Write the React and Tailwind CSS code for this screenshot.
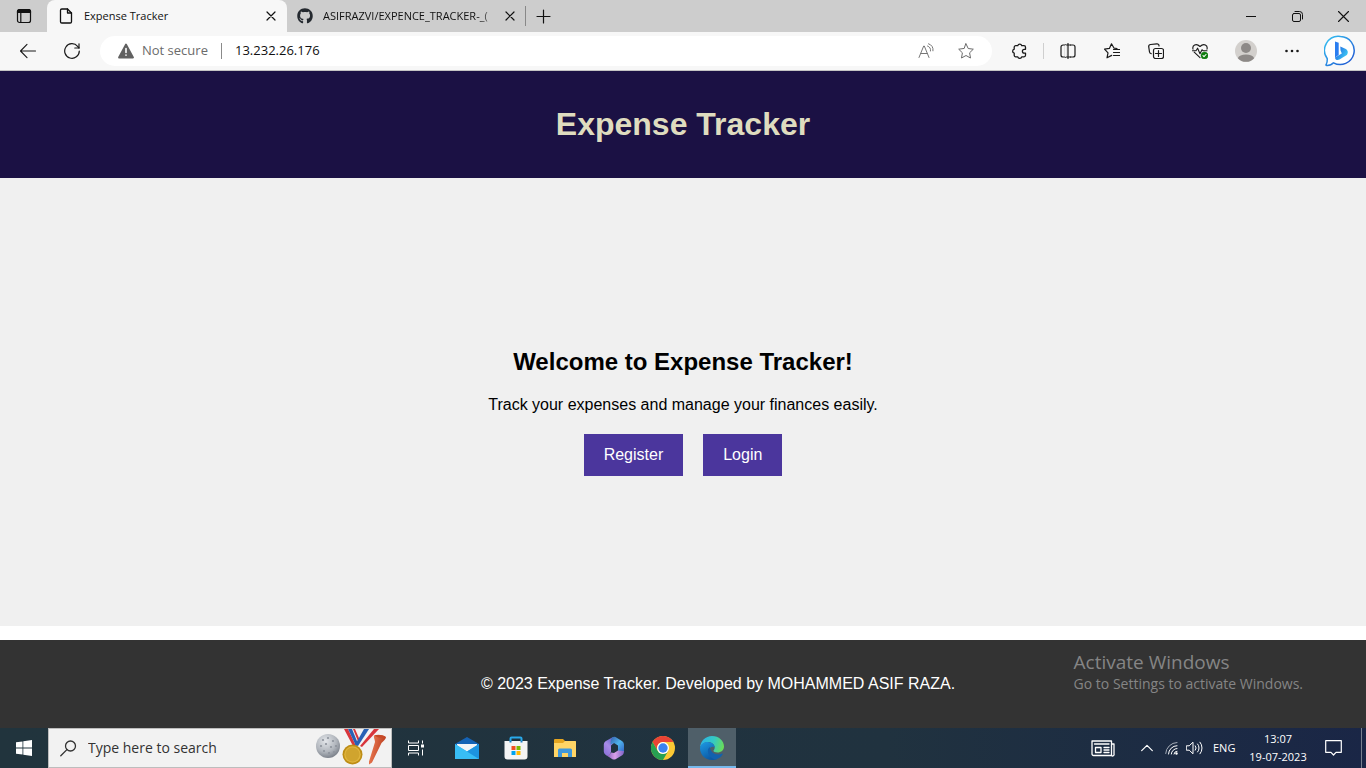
import React from "react";
import { FaGithub } from "react-icons/fa";

const Icon = ({ w = 16, h = w, sw = 1, className = "", children }) => (
  <svg
    width={w}
    height={h}
    viewBox={`0 0 ${w} ${h}`}
    fill="none"
    stroke="currentColor"
    strokeWidth={sw}
    strokeLinecap="round"
    strokeLinejoin="round"
    className={`shrink-0 ${className}`}
    aria-hidden="true"
  >
    {children}
  </svg>
);

const CloseIcon = () => (
  <Icon w={10} sw={1.2}>
    <path d="M1 1l8 8M9 1L1 9" />
  </Icon>
);

function TabStrip() {
  return (
    <div className="flex h-8 shrink-0 items-stretch bg-[#cdcdcd] text-[#111]">
      <button aria-label="Tab actions" className="flex w-[47px] items-center justify-center rounded-br-md">
        <Icon w={16} sw={1.2}>
          <rect x="1.5" y="1.5" width="13" height="13" rx="2" />
          <path d="M1.5 4.500v-1a2 2 0 012-2h9a2 2 0 012 2v1z" fill="currentColor" />
          <path d="M4.8 5v9.5" />
        </Icon>
      </button>
      <div className="flex w-[240px] items-center rounded-t-lg bg-[#f7f7f7] pr-2 pl-3">
        <Icon w={14} h={16} sw={1.3}>
          <path d="M8.5 1H2.8A1.3 1.3 0 001.5 2.3v11.4A1.3 1.3 0 002.8 15h8.4a1.3 1.3 0 001.3-1.3V5z" />
          <path d="M8.5 1v4h4" />
        </Icon>
        <button className="ml-[11px] min-w-0 flex-1 truncate text-left text-[11px]">Expense Tracker</button>
        <button aria-label="Close Expense Tracker" className="flex size-4 items-center justify-center">
          <CloseIcon />
        </button>
      </div>
      <div className="flex w-[238px] items-center pr-[7px] pl-[10px]">
        <FaGithub className="size-4 shrink-0 text-[#24292f]" />
        <button className="ml-[10px] min-w-0 flex-1 text-left text-[11px] whitespace-nowrap [mask-image:linear-gradient(to_right,black_90%,transparent)]">
          ASIFRAZVI/EXPENCE_TRACKER-_(
        </button>
        <button aria-label="Close repository tab" className="ml-1 flex size-4 items-center justify-center">
          <CloseIcon />
        </button>
      </div>
      <span className="my-[6px] w-px bg-[#888]" />
      <button aria-label="New tab" className="flex w-[34px] items-center justify-center">
        <Icon w={15} sw={1.2}>
          <path d="M7.5 1v13M1 7.5h13" />
        </Icon>
      </button>
      <div className="ml-auto flex">
        <button aria-label="Minimize" className="flex w-[46px] items-center justify-center">
          <Icon w={10}>
            <path d="M0 5.5h10" />
          </Icon>
        </button>
        <button aria-label="Restore" className="flex w-[46px] items-center justify-center">
          <Icon w={11}>
            <rect x="0.5" y="2.5" width="8" height="8" rx="1.5" />
            <path d="M3 .5h4.5a3 3 0 013 3V8" />
          </Icon>
        </button>
        <button aria-label="Close window" className="flex w-[46px] items-center justify-center">
          <Icon w={11} sw={1.1}>
            <path d="M.5 .5l10 10M10.500 .5l-10 10" />
          </Icon>
        </button>
      </div>
    </div>
  );
}

const ToolButton = ({ label, children }) => (
  <button aria-label={label} className="flex w-11 shrink-0 items-center justify-center">
    {children}
  </button>
);

function Toolbar() {
  return (
    <div className="flex h-[39px] shrink-0 items-stretch border-b border-[#c4c4c4] bg-[#f7f7f7] pr-1 pl-[6px] text-[#1a1a1a]">
      <ToolButton label="Back">
        <Icon w={16} sw={1.1}>
          <path d="M15.500 8H.5M7 1.300L.5 8 7 14.700" />
        </Icon>
      </ToolButton>
      <ToolButton label="Refresh">
        <Icon w={16} sw={1.2}>
          <path d="M15.300 8A7.300 7.300 0 1113.600 3.300L15 5" />
          <path d="M15 .8V5h-4.200" />
        </Icon>
      </ToolButton>
      <div className="my-1 ml-[6px] flex min-w-0 flex-1 items-center rounded-full bg-white pr-[18px] pl-[18px] text-[#6b6b6b]">
        <Icon w={16}>
          <path d="M8 1.500L15 14.500H1z" fill="#616161" stroke="#616161" strokeWidth="1.800" />
          <path d="M8 5.500v4M8 12v.2" stroke="#fff" strokeWidth="1.600" />
        </Icon>
        <button className="ml-2 w-[79px] text-left text-[13px] whitespace-nowrap">Not secure</button>
        <span className="h-4 w-px bg-[#8a8a8a]" />
        <input
          aria-label="Address"
          defaultValue="13.232.26.176"
          className="ml-[13px] min-w-0 flex-1 bg-transparent text-[13px] text-[#111] outline-none"
        />
        <button aria-label="Read aloud">
          <Icon w={16}>
            <path d="M1 14.500L5.700 3h.6L11 14.500M2.700 10.500h6.600M9.500 3a4.500 4.500 0 013 5M10.500 .8a6.500 6.500 0 014.500 7" stroke="#777" />
          </Icon>
        </button>
        <button aria-label="Add to favorites" className="ml-6">
          <Icon w={16}>
            <path
              d="M8 .8l2.200 4.700 5.100.7-3.700 3.600.9 5.200L8 12.500 3.500 15l.9-5.200L.7 6.200l5.100-.7z"
              stroke="#6b6b6b"
            />
          </Icon>
        </button>
      </div>
      <div className="ml-[5px] flex">
        <ToolButton label="Extensions">
          <Icon w={16} sw={1.300}>
            <path d="M3.200 4.200a1.500 1.500 0 011.500-1.500h2.100a2 2 0 013.900 0h2.300a1.500 1.500 0 011.500 1.500v2.100h-1.200a1.900 1.900 0 000 3.800h1.200v2.200a1.500 1.500 0 01-1.500 1.500h-2.300a2 2 0 01-3.900 0H4.700a1.500 1.500 0 01-1.500-1.500v-2.200a2 2 0 010-3.900z" />
          </Icon>
        </ToolButton>
        <span className="mx-[2px] my-[11px] w-px bg-[#cfcfcf]" />
        <ToolButton label="Split screen">
          <Icon w={16} sw={1.200}>
            <path d="M5.500 2H3a2 2 0 00-2 2v8a2 2 0 002 2h2.500V2zM10.500 2H13a2 2 0 012 2v8a2 2 0 01-2 2h-2.500" />
            <path d="M5.500 2H8M8 14H5.500M8 2h2.500M8 14h2.500" />
            <path d="M5.500 2.700v10.600" stroke="#f7f7f7" strokeWidth="1.500" />
            <path d="M8 .6v14.800" />
          </Icon>
        </ToolButton>
        <ToolButton label="Favorites">
          <Icon w={16} sw={1.200}>
            <path d="M13 5.500l-2.900-.3L7.500 .8 5.400 5.400l-4.900.7L4 9.800l-1 5 4.700-2.400M9.500 6.500h6M9.500 9.500h6M9.500 12.500h6" />
          </Icon>
        </ToolButton>
        <ToolButton label="Collections">
          <Icon w={16} sw={1.200}>
            <rect x="5.500" y="5.500" width="10" height="10" rx="2" />
            <path d="M10.500 7.500v6M7.500 10.500h6M11 3A2 2 0 008.800 .8L2.500 1.500A2 2 0 00.7 3.700L1.500 9a2 2 0 001.700 1.700" />
          </Icon>
        </ToolButton>
        <ToolButton label="Browser essentials">
          <Icon w={16} sw={1.100}>
            <path d="M1 6.200C0 2.500 4-.3 8 3.500c4-3.800 8-1 7 2.700M2.200 9.200L8 14.700" />
            <path d="M.5 7.700H4l1.600-2.500 2.400 5.500 2-4 1 1h4" />
            <circle cx="12.500" cy="12.500" r="3.500" fill="#107c10" stroke="#107c10" strokeWidth=".5" />
            <path d="M11 12.700l1 1 2-2.200" stroke="#fff" />
          </Icon>
        </ToolButton>
        <div className="mx-[2px] flex">
          <ToolButton label="Profile">
            <Icon w={22}>
              <circle cx="11" cy="11" r="11" fill="#d3d0cd" stroke="none" />
              <circle cx="11" cy="8" r="5" fill="#8d8987" stroke="none" />
              <path d="M2.800 18.200a8.500 5 0 0116.400 0 11 11 0 01-16.400 0z" fill="#8d8987" stroke="none" />
            </Icon>
          </ToolButton>
        </div>
        <ToolButton label="Settings and more">
          <Icon w={16}>
            <g fill="currentColor" stroke="none">
              <circle cx="2.500" cy="8" r="1.300" />
              <circle cx="8" cy="8" r="1.300" />
              <circle cx="13.500" cy="8" r="1.300" />
            </g>
          </Icon>
        </ToolButton>
        <div className="ml-1 flex">
          <ToolButton label="Bing Chat">
            <Icon w={32}>
              <defs>
                <linearGradient id="bingRing" x1="0" y1="0" x2="1" y2="1">
                  <stop offset="0" stopColor="#35c5f3" />
                  <stop offset="1" stopColor="#1f4fd0" />
                </linearGradient>
                <linearGradient id="bingB" x1="0" y1="0" x2="1" y2="0.600">
                  <stop offset="0" stopColor="#2054e0" />
                  <stop offset="1" stopColor="#3ccbf4" />
                </linearGradient>
              </defs>
              <path
                d="M16.500 1.500a14 14 0 11-7 26.300c-1.500 1.700-4 2.800-6.700 2.700-1-.1-1-.7-.5-1.300 1-1.500 1-3 1-5.500A14 14 0 0116.500 1.500z"
                fill="#fff"
                stroke="url(#bingRing)"
                strokeWidth="1.500"
              />
              <path d="M11 6.500l3.700 1.300v12.200L11 22.500z" fill="#2a7df0" stroke="none" />
              <path
                d="M16.300 11.500l5 2.200c2.800 1.200 3.200 4.200 1.500 6.300l-7.300 4.600c-2.300 1-4.500 0-4.500-2.200l6.800-4-1.300-3.200z"
                fill="url(#bingB)"
                stroke="none"
              />
            </Icon>
          </ToolButton>
        </div>
      </div>
    </div>
  );
}

function Page() {
  return (
    <div className="flex flex-1 flex-col bg-white font-['Liberation_Sans',Arial,sans-serif] text-base text-black">
      <header className="bg-[#1b1144] py-[35px] text-center text-[#dfdcbf]">
        <h1 className="text-[32px] leading-[37px] font-bold">Expense Tracker</h1>
      </header>
      <main className="flex flex-1 flex-col items-center justify-center bg-[#f0f0f0] pb-px text-center">
        <h2 className="mt-[20px] text-2xl leading-7 font-bold">Welcome to Expense Tracker!</h2>
        <p className="mt-5 leading-[18px]">Track your expenses and manage your finances easily.</p>
        <div className="mt-5 flex gap-5">
          <a href="#register" className="bg-[#4b369d] px-5 py-3 leading-[18px] text-white">
            Register
          </a>
          <a href="#login" className="bg-[#4b369d] px-5 py-3 leading-[18px] text-white">
            Login
          </a>
        </div>
      </main>
      <footer className="relative mt-[14px] bg-[#333] py-[35px] pl-[70px] text-center leading-[18px] text-white">
        <p>© 2023 Expense Tracker. Developed by MOHAMMED ASIF RAZA.</p>
        <div className="absolute top-[10px] right-[63px] text-left font-['Open_Sans','Noto_Sans',sans-serif] text-[#858585]">
          <p className="text-[19px] leading-6">Activate Windows</p>
          <p className="text-sm leading-5">Go to Settings to activate Windows.</p>
        </div>
      </footer>
    </div>
  );
}

const TaskButton = ({ label, active, children }) => (
  <button
    aria-label={label}
    className={`flex w-12 shrink-0 items-center justify-center ${
      active ? "border-b-2 border-[#76b9ed] bg-[#4f5f69] pt-[2px]" : ""
    }`}
  >
    {children}
  </button>
);

function SearchArt() {
  return (
    <svg width="72" height="38" viewBox="0 0 72 38" className="shrink-0" aria-hidden="true">
      <defs>
        <radialGradient id="golf" cx="0.400" cy="0.300" r="0.750">
          <stop offset="0" stopColor="#e3e6ea" />
          <stop offset="0.600" stopColor="#b0b5bc" />
          <stop offset="1" stopColor="#747a84" />
        </radialGradient>
        <linearGradient id="tee" x1="0" y1="0" x2="1" y2="0.300">
          <stop offset="0" stopColor="#f4865c" />
          <stop offset="1" stopColor="#b93c1e" />
        </linearGradient>
      </defs>
      <circle cx="12" cy="17" r="12" fill="url(#golf)" />
      <g fill="#8d939c">
        {[[7, 11], [12, 9], [17, 12], [5, 17], [10, 15], [15, 18], [20, 17], [8, 22], [13, 24], [18, 23]].map(([x, y]) => (
          <circle key={`${x}-${y}`} cx={x} cy={y} r="1.100" />
        ))}
      </g>
      <path d="M28 0h11l7 17h-8z" fill="#f4f4f4" />
      <path d="M28 0h4l8 17h-3zM37 0h2l7 16-2 1z" fill="#d8363c" />
      <path d="M32 0h4l7 17h-3z" fill="#2861b5" />
      <path d="M51 0h11L45 19l-5-3z" fill="#f4f4f4" />
      <path d="M58 0h5L46 18l-2-1z" fill="#d8363c" />
      <path d="M48 0h5L42 17l-3-1z" fill="#2861b5" />
      <circle cx="36.500" cy="25.500" r="10" fill="#bd8d16" />
      <circle cx="36.500" cy="25.500" r="8.300" fill="#e0b53e" />
      <circle cx="36.500" cy="25.500" r="7" fill="#d0a42e" />
      <path d="M58 6.500c3-1.500 9-1 12 1.500 0 2-2.500 4-4.500 6L56 33.500 53 35.500l0-3L59 13c0-2-1.500-4.500-1-6.500z" fill="url(#tee)" />
      <path d="M58.500 6.500c3-1 8-.5 11 1.500-3 1.500-8 1-11-1.500z" fill="#c64a28" />
    </svg>
  );
}

function Taskbar() {
  return (
    <div className="flex h-10 shrink-0 items-stretch bg-linear-to-r from-[#21343d] via-[#20323f] via-65% to-[#1a2646] text-white">
      <TaskButton label="Start">
        <svg width="16" height="16" viewBox="0 0 16 16" fill="#fff" aria-hidden="true">
          <path d="M0 2.300L6.500 1.400V7.600H0zM7.300 1.300L16 0v7.600H7.300zM0 8.400h6.500v6.200L0 13.700zM7.300 8.400H16V16l-8.700-1.300z" />
        </svg>
      </TaskButton>
      <div className="flex w-[344px] items-center border border-[#bdbdbd] bg-[#f2f2f2] pr-[3px] pl-[11px] text-[#333]">
        <Icon w={17} sw={1.300}>
          <circle cx="10.500" cy="6" r="5" />
          <path d="M6.900 9.600L.8 15.800" />
        </Icon>
        <input
          aria-label="Type here to search"
          placeholder="Type here to search"
          className="ml-[11px] min-w-0 flex-1 bg-transparent text-sm outline-none placeholder:text-[#333]"
        />
        <SearchArt />
      </div>
      <TaskButton label="Task view">
        <Icon w={18} h={16}>
          <path d="M1.500 .5v2.500h10V.5M1.500 15.500V13h10v2.500M1.500 5.500h10v5h-10zM15.500 .5v3M15.500 9.500v6" strokeLinecap="butt" />
          <rect x="14" y="4.500" width="3" height="3" fill="#fff" stroke="none" />
        </Icon>
      </TaskButton>
      <div className="ml-[3px] flex gap-px">
        <TaskButton label="Mail">
          <svg width="24" height="22" viewBox="0 0 24 22" aria-hidden="true">
            <path d="M0 7L12 0l12 7v4H0z" fill="#1563b5" />
            <path d="M2 7h20v3l-10 6L2 10z" fill="#f3f4f6" />
            <path d="M0 7l12 7.500L24 7v15H0z" fill="#2fb4f0" />
            <path d="M0 7l24 15H0z" fill="#38bdf5" />
            <path d="M12 14.500L24 7v15z" fill="#1d93df" />
          </svg>
        </TaskButton>
        <TaskButton label="Microsoft Store">
          <svg width="24" height="24" viewBox="0 0 24 24" aria-hidden="true">
            <path d="M6.500 6V2.500a1 1 0 011-1h9a1 1 0 011 1V6" fill="none" stroke="#29a9ea" strokeWidth="2" />
            <path d="M.5 5h23v15.500a3 3 0 01-3 3h-17a3 3 0 01-3-3z" fill="#f4f4f4" />
            <path d="M6.500 5v1.500M17.500 5v1.500" stroke="#1a7fc4" strokeWidth="2" />
            <path d="M7.500 10h4v4h-4z" fill="#f25022" />
            <path d="M12.500 10h4v4h-4z" fill="#7fba00" />
            <path d="M7.500 15h4v4h-4z" fill="#00a4ef" />
            <path d="M12.500 15h4v4h-4z" fill="#ffb900" />
          </svg>
        </TaskButton>
        <TaskButton label="File Explorer">
          <svg width="22" height="20" viewBox="0 0 22 20" aria-hidden="true">
            <path d="M0 2a1 1 0 011-1h8l2 2h10a1 1 0 011 1v14H0z" fill="#e5a520" />
            <path d="M0 5h9l2-2h10.500l.5 1v15H0z" fill="#ffd566" />
            <path d="M4 19v-7a1.500 1.500 0 011.500-1.500h11A1.500 1.500 0 0118 12v7h-4v-4H8v4z" fill="#3f98dc" />
          </svg>
        </TaskButton>
        <TaskButton label="Microsoft 365">
          <svg width="22" height="24" viewBox="0 0 22 24" aria-hidden="true">
            <defs>
              <linearGradient id="mLeft" x1="0.800" y1="0" x2="0.200" y2="1">
                <stop offset="0" stopColor="#5a62c8" />
                <stop offset="0.500" stopColor="#a78be8" />
                <stop offset="1" stopColor="#8a70d8" />
              </linearGradient>
              <linearGradient id="mRight" x1="0" y1="0" x2="1" y2="1">
                <stop offset="0" stopColor="#3560ae" />
                <stop offset="0.500" stopColor="#4fb4ec" />
                <stop offset="1" stopColor="#3160c4" />
              </linearGradient>
              <linearGradient id="mBottom" x1="0" y1="0" x2="1" y2="0">
                <stop offset="0" stopColor="#7a58b8" />
                <stop offset="0.500" stopColor="#d9a0e8" />
                <stop offset="1" stopColor="#7f63c8" />
              </linearGradient>
            </defs>
            <path d="M10 1L2.500 5.200A4 4 0 00.8 8.500v7a4 4 0 001.700 3.300l3 1.700L8 16V9.500L12 6V1z" fill="url(#mLeft)" />
            <path d="M9.500 1.200C8 2.500 7.500 4.500 7.500 8.500L11 7l4 2.500v5l-1 2.500 7-1V8.500a4 4 0 00-1.700-3.300L12.500 1a3 3 0 00-3 .2z" fill="url(#mRight)" />
            <path d="M3 19c2 .5 4-.5 5-2.500l3 .5 4-2.500 6 .5c0 2-.5 3.300-1.800 4.200l-6.200 3.700a4 4 0 01-4 0z" fill="url(#mBottom)" />
          </svg>
        </TaskButton>
        <TaskButton label="Chrome">
          <svg width="24" height="24" viewBox="0 0 24 24" aria-hidden="true">
            <circle cx="12" cy="12" r="12" fill="#fcc934" />
            <path d="M1.600 6A12 12 0 0122.400 6H12a6 6 0 00-5.200 9z" fill="#ea4335" />
            <path d="M1.600 6A12 12 0 0012 24l5.200-9A6 6 0 016.800 15z" fill="#27a152" />
            <circle cx="12" cy="12" r="6" fill="#fff" />
            <circle cx="12" cy="12" r="4.700" fill="#3b82ef" />
          </svg>
        </TaskButton>
        <TaskButton label="Edge" active>
          <svg width="24" height="24" viewBox="0 0 24 24" aria-hidden="true">
            <defs>
              <linearGradient id="eTop" x1="0" y1="0.300" x2="1" y2="0.500">
                <stop offset="0" stopColor="#2bb3e8" />
                <stop offset="0.550" stopColor="#35c9c3" />
                <stop offset="1" stopColor="#69dc59" />
              </linearGradient>
              <linearGradient id="eBody" x1="0" y1="0" x2="0.500" y2="1">
                <stop offset="0" stopColor="#1d9be5" />
                <stop offset="1" stopColor="#0c59a4" />
              </linearGradient>
            </defs>
            <path d="M0 11.500C.5 5 5.500 0 12 0c7 0 12 5 12 10.500 0 3.700-3 6-6.500 6-2.500 0-4-.8-4-1.700 0-.6 1.200-1.200 1.200-3.300C14.700 8.500 12 6 8 6 4 6 1 8.500 0 11.500z" fill="url(#eTop)" />
            <path d="M0 12c.5-3.500 3.700-6 7.500-6 4.500 0 7.200 2.800 7.200 5.500-1-1.500-5.700-1-5.700 3.500 0 4 3 8 8 8-1.500.7-3 1-5 1C5 24 0 18.500 0 12z" fill="url(#eBody)" />
            <path d="M9.700 11c-1.700 1.500-2 3-1.700 5 .7 4 4 7.300 8.500 7.300 3-1 5-3 6.300-5.300.2-.5-.2-.8-.7-.5-5.500 2.700-11.600-.5-12.400-6.500z" fill="#1261ae" />
          </svg>
        </TaskButton>
      </div>
      <div className="ml-auto flex items-center">
        <button aria-label="News and interests">
          <Icon w={24} h={17} sw={1.300}>
            <path d="M20.500 15.500h-18A1.500 1.500 0 011 14V1h19.500v14.500zM20.500 4H23v10a1.500 1.500 0 01-2.500 1.500M3.500 4H18M13 7.500h5M13 10h5M13 12.500h5" />
            <path d="M4.500 7.500h5.500v5H4.500z" />
          </Icon>
        </button>
        <button aria-label="Show hidden icons" className="ml-[26px]">
          <Icon w={12} h={8} sw={1.200}>
            <path d="M.7 6.700L6 1.400l5.300 5.300" />
          </Icon>
        </button>
        <button aria-label="Network" className="ml-3">
          <Icon w={13} h={14}>
            <path d="M.7 12.500A11.500 11.500 0 0112 1.500" stroke="#a8afba" />
            <path d="M3.500 13A8.500 8.500 0 0112 4.700M6.300 13A5.800 5.800 0 0112 7.500M9 13a3 3 0 013-2.700" />
            <circle cx="11.500" cy="12.500" r="1.200" fill="#fff" stroke="none" />
          </Icon>
        </button>
        <button aria-label="Volume" className="ml-2">
          <Icon w={17} h={14}>
            <path d="M.7 4.800h2.500L7 1.200v11.600L3.200 9.200H.7zM9.300 4.800a3.500 3.500 0 010 4.400M11.600 3a6 6 0 010 8M14 1.200a9 9 0 010 11.600" />
          </Icon>
        </button>
        <button className="ml-[10px] w-6 text-left text-[11px]">ENG</button>
        <button className="ml-[6px] w-[70px] text-center text-[11px] leading-[18px] whitespace-nowrap">
          <span className="block">13:07</span>
          <span className="block">19-07-2023</span>
        </button>
        <button aria-label="Notifications" className="ml-3">
          <Icon w={17} h={16} sw={1.200}>
            <path d="M.7 .7h15.600v11.600H11L8.500 15 6 12.300H.7z" />
          </Icon>
        </button>
        <button aria-label="Show desktop" className="ml-[19px] h-10 w-[5px] border-l border-[#77808f]" />
      </div>
    </div>
  );
}

export default function App() {
  return (
    <div className="flex min-h-screen flex-col overflow-hidden font-['Open_Sans','Noto_Sans',sans-serif]">
      <TabStrip />
      <Toolbar />
      <Page />
      <Taskbar />
    </div>
  );
}
